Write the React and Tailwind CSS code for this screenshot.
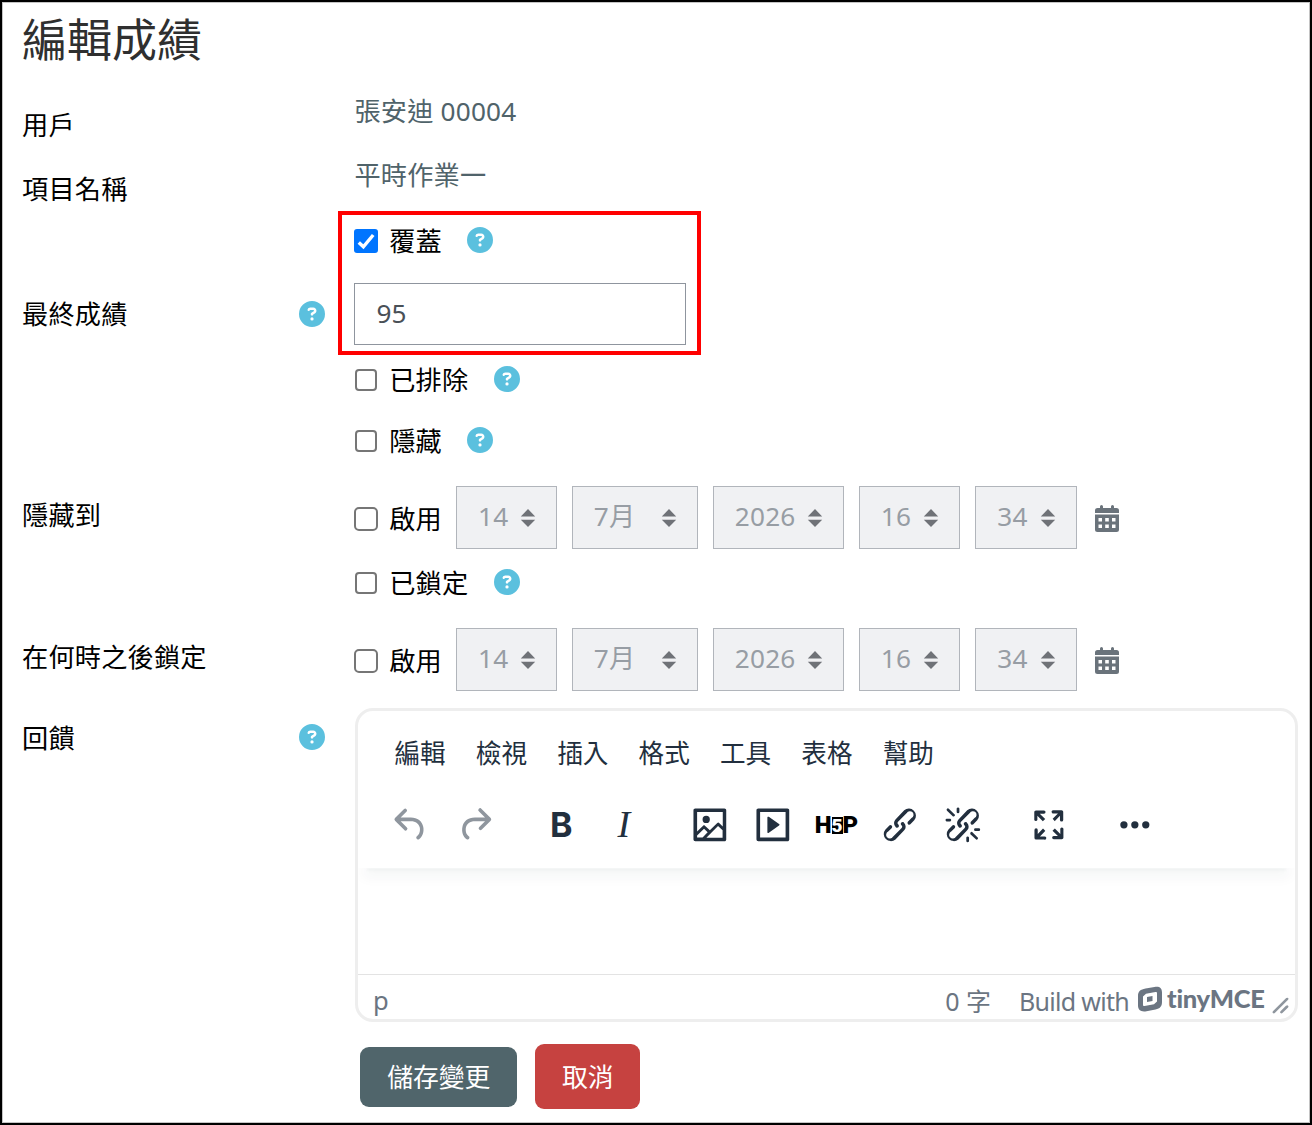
import React, { useState } from 'react';
import { FaCircleQuestion } from 'react-icons/fa6';

const MENUS = ['編輯', '檢視', '插入', '格式', '工具', '表格', '幫助'];

const LINK_PATH = 'M6.2 12.3a1 1 0 0 1 1.4 1.4l-2 2a2 2 0 1 0 2.6 2.8l4.8-4.8a1 1 0 0 0 0-1.4 1 1 0 1 1 1.4-1.3 2.9 2.9 0 0 1 0 4L9.6 20a3.9 3.9 0 0 1-5.5-5.5l2-2Zm11.6-.6a1 1 0 0 1-1.4-1.4l2-2a2 2 0 1 0-2.6-2.8L11 10.3a1 1 0 0 0 0 1.4A1 1 0 1 1 9.6 13a2.9 2.9 0 0 1 0-4L14.4 4a3.9 3.9 0 0 1 5.5 5.5l-2 2Z';

const ICONS = {
    undo: 'M6.4 8H12c3.7 0 6.2 2 6.8 5.1.6 2.7-.4 5.6-2.3 6.8a1 1 0 0 1-1-1.8c1.1-.6 1.8-2.7 1.4-4.6-.5-2.1-2.1-3.5-4.9-3.5H6.4l3.3 3.3a1 1 0 1 1-1.4 1.4l-5-5a1 1 0 0 1 0-1.4l5-5a1 1 0 0 1 1.4 1.4L6.4 8Z',
    redo: 'M17.6 10H12c-2.8 0-4.4 1.4-4.9 3.5-.4 2 .3 4 1.4 4.6a1 1 0 1 1-1 1.8c-2-1.2-2.9-4.1-2.3-6.8.6-3 3-5.1 6.8-5.1h5.6l-3.3-3.3a1 1 0 1 1 1.4-1.4l5 5a1 1 0 0 1 0 1.4l-5 5a1 1 0 0 1-1.4-1.4l3.3-3.3Z',
    image: 'm5 15.7 3.3-3.2c.3-.3.7-.3 1 0L12 15l4.1-4c.3-.4.8-.4 1 0l2 1.9V5H5v10.7ZM5 18V19h3l2.8-2.9-2-2L5 17.9Zm14-3-2.5-2.4-6.4 6.5H19v-4ZM4 3h16c.6 0 1 .4 1 1v16c0 .6-.4 1-1 1H4a1 1 0 0 1-1-1V4c0-.6.4-1 1-1Zm6 8a2 2 0 1 0 0-4 2 2 0 0 0 0 4Z',
    media: 'M4 3h16c.6 0 1 .4 1 1v16c0 .6-.4 1-1 1H4a1 1 0 0 1-1-1V4c0-.6.4-1 1-1Zm1 2v14h14V5H5Zm4.8 2.6 5.6 4a.5.5 0 0 1 0 .8l-5.6 4A.5.5 0 0 1 9 16V8a.5.5 0 0 1 .8-.4Z',
    link: LINK_PATH,
    unlink: LINK_PATH + 'M7.6 6.3a.8.8 0 0 1-1 1.1L3.3 4.2a.7.7 0 1 1 1-1l3.2 3.1ZM5.1 8.6a.8.8 0 0 1 0 1.5H3a.8.8 0 0 1 0-1.5H5Zm5-3.5a.8.8 0 0 1-1.5 0V3a.8.8 0 0 1 1.5 0V5Zm6 11.8a.8.8 0 0 1 1-1l3.2 3.2a.8.8 0 0 1-1 1L16 17Zm-2.2 2a.8.8 0 0 1 1.5 0V21a.8.8 0 0 1-1.5 0V19Zm5-3.5a.7.7 0 1 1 0-1.5H21a.8.8 0 0 1 0 1.5H19Z',
    fullscreen: 'm15.3 10-1.2-1.3 2.9-3h-2.3a.9.9 0 1 1 0-1.7H19c.5 0 .9.4.9.9v4.4a.9.9 0 1 1-1.8 0V7l-2.9 3Zm0 4 3 3v-2.3a.9.9 0 1 1 1.7 0V19c0 .5-.4.9-.9.9h-4.4a.9.9 0 1 1 0-1.8H17l-3-2.9 1.3-1.2ZM10 15.4l-2.9 3h2.3a.9.9 0 1 1 0 1.7H5a.9.9 0 0 1-.9-.9v-4.4a.9.9 0 1 1 1.8 0V17l2.9-3 1.2 1.3ZM8.7 10 5.7 7v2.3a.9.9 0 0 1-1.7 0V5c0-.5.4-.9.9-.9h4.4a.9.9 0 0 1 0 1.8H7l3 2.9-1.3 1.2Z',
    more: 'M6 10a2 2 0 1 0 0 4 2 2 0 0 0 0-4Zm6 0a2 2 0 1 0 0 4 2 2 0 0 0 0-4Zm6 0a2 2 0 1 0 0 4 2 2 0 0 0 0-4Z'
};

function Help() {
    return <FaCircleQuestion size={26} className="text-[#5bc0de] shrink-0" />;
}

function Row({ label, labelClass = '', help, className, children }) {
    return (
        <div className={`flex ${className}`}>
            <div className={`w-[303px] shrink-0 flex items-center justify-between text-black ${labelClass}`}>
                <span>{label}</span>
                {help && <Help />}
            </div>
            <div className="ml-[29.4px] flex items-center flex-1">{children}</div>
        </div>
    );
}

function Check({ checked, onChange, large }) {
    if (checked) {
        return (
            <button onClick={onChange} className="w-6 h-6 rounded-[3px] bg-[#0075ff] shrink-0 flex items-center justify-center">
                <svg viewBox="0 0 24 24" className="w-6 h-6" fill="none" stroke="#fff" strokeWidth="3.4">
                    <path d="M4.8 13.4l4.6 4.4L19.2 6" />
                </svg>
            </button>
        );
    }
    return (
        <button
            onClick={onChange}
            className={`border-2 border-[#767676] bg-white shrink-0 ${large ? 'w-6 h-6 rounded-[5px]' : 'w-[22px] h-[22px] rounded-[4px] mx-px'}`}
        />
    );
}

function CheckRow({ text, initial = false, className }) {
    const [on, setOn] = useState(initial);
    return (
        <Row className={className}>
            <Check checked={on} onChange={() => setOn(!on)} />
            <span className="ml-[10.8px] mr-[25.2px] pb-px text-black">{text}</span>
            <span className="pb-[2px]"><Help /></span>
        </Row>
    );
}

function Select({ value, className }) {
    return (
        <div className={`h-[63px] border border-[#b1b5bb] bg-[#f0f1f3] pl-[21px] pr-[20px] flex items-center justify-between text-[#979da4] ${className}`}>
            <span className="pb-[3px]">{value}</span>
            <svg width="16" height="20" viewBox="0 0 16 20" fill="#6f7277">
                <path d="M8 1l7.2 7.4H.8zM8 19l7.2-7.2H.8z" />
            </svg>
        </div>
    );
}

function CalendarIcon() {
    return (
        <svg width="24" height="27" viewBox="0 0 24 27" fill="#6a737b" className="ml-[18.6px] mt-[2px] shrink-0">
            <path d="M5 1.5a1.5 1.5 0 0 1 3 0V3h8V1.5a1.5 1.5 0 0 1 3 0V3h2.5A2.5 2.5 0 0 1 24 5.5V8H0V5.5A2.5 2.5 0 0 1 2.5 3H5z" />
            <path fillRule="evenodd" d="M0 9.5h24v15a2.500 2.500 0 0 1-2.500 2.500h-19A2.500 2.500 0 0 1 0 24.500zM3.500 13v3.500H7V13zM10.200 13v3.500h3.600V13zM17 13v3.500h3.500V13zM3.500 19.500V23H7v-3.500zM10.200 19.500V23h3.600v-3.500zM17 19.500V23h3.500v-3.500z" />
        </svg>
    );
}

function DateRow({ label, className }) {
    return (
        <Row label={label} labelClass="pb-[5px]" className={`h-[63px] ${className}`}>
            <div className="pt-[3px] flex items-center w-[101.6px] shrink-0">
                <Check large />
                <span className="ml-[10.8px] text-black">啟用</span>
            </div>
            <Select value="14" className="w-[101px]" />
            <Select value="7月" className="w-[126.5px] ml-[14.8px]" />
            <Select value="2026" className="w-[131.5px] ml-[14.5px]" />
            <Select value="16" className="w-[101px] ml-[14.5px]" />
            <Select value="34" className="w-[101.5px] ml-[15.5px]" />
            <CalendarIcon />
        </Row>
    );
}

function ToolButton({ icon, dim, children }) {
    return (
        <button className={`w-[63.2px] h-11 flex items-center justify-center ${dim ? 'text-[#8f969e]' : 'text-[#222f3e]'}`}>
            {children || (
                <svg viewBox="0 0 24 24" className="w-[43.7px] h-[43.7px]" fill="currentColor">
                    <path fillRule="evenodd" d={ICONS[icon]} />
                </svg>
            )}
        </button>
    );
}

function Editor() {
    return (
        <div className="w-[943px] h-[314px] border-[3px] border-[#eee] rounded-[18px] bg-white flex flex-col text-[25.6px] tracking-normal text-[#222f3e]">
            <div className="h-[157px] shrink-0">
                <div className="flex pl-[36.4px] pt-[24px] gap-[30.2px] leading-[38px]">
                    {MENUS.map(m => <span key={m}>{m}</span>)}
                </div>
                <div className="flex gap-[23px] pl-[21.7px] pt-[30px]">
                    <div className="flex">
                        <ToolButton icon="undo" dim />
                        <ToolButton icon="redo" dim />
                    </div>
                    <div className="flex">
                        <ToolButton><span className="font-['Inter'] font-bold text-[34px] leading-[40px] pl-px">B</span></ToolButton>
                        <ToolButton><span className="font-['Liberation_Serif'] italic text-[38px] leading-[40px] pb-[2px]">I</span></ToolButton>
                    </div>
                    <div className="flex">
                        <ToolButton icon="image" />
                        <ToolButton icon="media" />
                        <ToolButton>
                            <span className="flex items-center font-['Roboto'] font-black text-[24px] leading-[34px] text-black">
                                <span>H</span>
                                <span className="w-[11px] h-[17px] bg-black text-white text-[19px] leading-[18px] text-center">5</span>
                                <span>P</span>
                            </span>
                        </ToolButton>
                        <ToolButton icon="link" />
                        <ToolButton icon="unlink" />
                    </div>
                    <ToolButton icon="fullscreen" />
                    <ToolButton icon="more" />
                </div>
            </div>
            {/* Text area, shaded under the toolbar */}
            <div className="h-[106px] px-[3px] overflow-hidden">
                <div className="h-px -mt-px mx-[6px] shadow-[0_2px_3px_0_rgba(34,47,62,0.1),0_4px_14px_4px_rgba(34,47,62,0.06)]" />
            </div>
            <div className="flex-1 border-t border-[#e3e3e3] flex items-center text-[#6b7582] pl-[15px]">
                <span className="flex-1 pt-[8px]">p</span>
                <span className="pt-[7px] mr-[28px] text-[25px]">0 字</span>
                <span className="pt-[7px] mr-[9px] text-[25px] tracking-[-0.7px]">Build with</span>
                <svg width="24" height="26" viewBox="0 0 24 26" fill="#6b7582" className="mt-[3px]">
                    <path fillRule="evenodd" d="M7.5 2.6l9-1.7C21.5 0 24 2 24 6.5v9.5c0 4.500-2 6.600-6.500 7.500l-9 1.700C3 26.200 0 24 0 19.500V10c0-4.500 2.500-6.500 7.500-7.400zM5 10.500v8.300c0 1 .6 1.400 1.600 1.200l9.400-1.800 3-2.700V7.200c0-1-.6-1.400-1.600-1.200L8 7.800z" />
                    <path d="M9 11l5.500-1v5L9 16z" />
                </svg>
                <span className="font-['Lato'] font-black text-[25.5px] leading-[34px] tracking-[-0.25px] ml-[5px] mt-[2px] w-[99px] whitespace-nowrap">tinyMCE</span>
                <svg viewBox="0 0 10 10" className="w-[19px] h-[19px] ml-[5px] mr-[5px] mt-[17px] shrink-0" fill="#8f969e">
                    <path d="M8.1 1.1A.5.5 0 1 1 9 2l-7 7A.5.5 0 1 1 1 8l7-7ZM8.1 5.1A.5.5 0 1 1 9 6l-3 3A.5.5 0 1 1 5 8l3-3Z" />
                </svg>
            </div>
        </div>
    );
}

export default function App() {
    const [grade, setGrade] = useState('95');

    return (
        <div className="w-[1312px] h-[1125px] overflow-hidden border-2 border-black shadow-[inset_0_0_0_1px_#c4c4c4] bg-white pl-[20px] font-['Noto_Sans','Noto_Sans_CJK_TC',sans-serif] text-[26.2px] tracking-[0.2px] leading-[36px] text-[#50636a]">
            <h1 className="h-[78px] text-[45px] leading-[76px] tracking-normal text-[#2f2f2f]">編輯成績</h1>

            <Row label="用戶" labelClass="pt-[27px]" className="h-[64px] -mt-px">張安迪 00004</Row>
            <Row label="項目名稱" labelClass="pt-[27px]" className="h-[64px] mb-px">平時作業一</Row>

            <div className="relative">
                <CheckRow text="覆蓋" initial className="h-[66px]" />
                <Row label="最終成績" help className="h-[80px]">
                    <input
                        value={grade}
                        onChange={e => setGrade(e.target.value)}
                        className="w-[332px] h-[62px] border border-[#8f959e] px-[21px] pb-[2px] text-[#495057] outline-none"
                    />
                </Row>
                <div className="absolute left-[316px] top-[3px] w-[363px] h-[144px] border-4 border-[#f00] pointer-events-none" />
            </div>

            <CheckRow text="已排除" className="h-[52px]" />
            <CheckRow text="隱藏" className="h-[70px]" />
            <DateRow label="隱藏到" className="mt-[10px]" />
            <CheckRow text="已鎖定" className="h-[68px]" />
            <DateRow label="在何時之後鎖定" className="mt-[11px]" />

            <div className="flex mt-[16px]">
                <div className="w-[303px] h-[60px] shrink-0 flex items-center justify-between text-black">
                    <span className="pt-[2px]">回饋</span>
                    <Help />
                </div>
                <div className="ml-[30px] pt-px">
                    <Editor />
                </div>
            </div>

            <div className="flex items-center gap-[18px] pl-[338.3px] mt-[22px] text-white text-[25.8px] tracking-normal">
                <button className="w-[157px] h-[60px] mt-px rounded-[9px] bg-[#50656b]">儲存變更</button>
                <button className="w-[105px] h-[65px] rounded-[9px] bg-[#c64240]">取消</button>
            </div>
        </div>
    );
}
